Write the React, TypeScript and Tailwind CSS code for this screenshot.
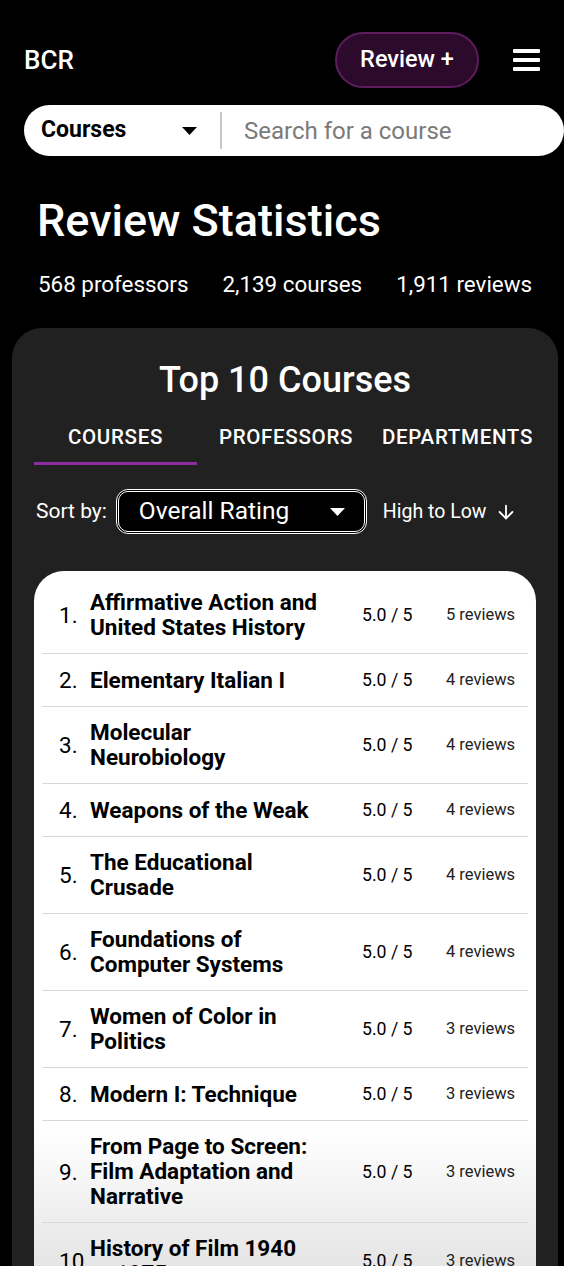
import { ArrowDown } from "lucide-react";

const courses = [
  { title: "Affirmative Action and United States History", rating: "5.0 / 5", reviews: "5 reviews" },
  { title: "Elementary Italian I", rating: "5.0 / 5", reviews: "4 reviews" },
  { title: "Molecular Neurobiology", rating: "5.0 / 5", reviews: "4 reviews" },
  { title: "Weapons of the Weak", rating: "5.0 / 5", reviews: "4 reviews" },
  { title: "The Educational Crusade", rating: "5.0 / 5", reviews: "4 reviews" },
  { title: "Foundations of Computer Systems", rating: "5.0 / 5", reviews: "4 reviews" },
  { title: "Women of Color in Politics", rating: "5.0 / 5", reviews: "3 reviews" },
  { title: "Modern I: Technique", rating: "5.0 / 5", reviews: "3 reviews" },
  { title: "From Page to Screen: Film Adaptation and Narrative", rating: "5.0 / 5", reviews: "3 reviews" },
  { title: "History of Film 1940 to 1975", rating: "5.0 / 5", reviews: "3 reviews" },
];

const Caret = () => (
  <svg width="15" height="8" viewBox="0 0 15 8" className="shrink-0">
    <path d="M0 0 L15 0 L7.5 8 Z" fill="currentColor" />
  </svg>
);

export default function App() {
  return (
    <div className="h-[1266px] bg-black text-white font-['Roboto',sans-serif] overflow-hidden">
      {/* Header */}
      <div className="flex items-center justify-between pl-6 pr-6 pt-8 h-[88px]">
        <span className="text-[26px] font-medium">BCR</span>
        <div className="flex items-center gap-[34px]">
          <button className="w-[144px] h-[56px] rounded-full bg-[#2c0a2c] border-2 border-[#5e1c5e] text-[23.5px] font-medium">
            Review +
          </button>
          <div className="flex flex-col gap-[5px] w-[27px]">
            <span className="h-[4px] bg-white rounded-[1px]" />
            <span className="h-[4px] bg-white rounded-[1px]" />
            <span className="h-[4px] bg-white rounded-[1px]" />
          </div>
        </div>
      </div>

      {/* Search */}
      <div className="ml-6 mt-[17px] w-[540px] h-[51px] bg-white rounded-full flex items-center text-black">
        <div className="flex items-center w-[196px] pl-[17px] pr-[23px] justify-between">
          <span className="text-[23px] font-bold">Courses</span>
          <Caret />
        </div>
        <div className="w-[2px] h-[37px] bg-[#c8c8c8]" />
        <span className="ml-[22px] text-[24px] text-[#7a7a7a]">Search for a course</span>
      </div>

      {/* Stats */}
      <h1 className="ml-[37px] mt-[38px] text-[45px] font-medium leading-[54px]">Review Statistics</h1>
      <div className="ml-[38px] mt-[22px] flex gap-[34px] text-[22.4px] leading-[28px]">
        <span>568 professors</span>
        <span>2,139 courses</span>
        <span>1,911 reviews</span>
      </div>

      {/* Card */}
      <div className="ml-3 mr-[6px] mt-[30px] bg-[#212121] rounded-[30px] pt-[29px] pb-10">
        <h2 className="text-center text-[36px] font-medium leading-[46px]">Top 10 Courses</h2>

        <div className="mt-[17px] ml-[22px] flex text-[20.5px] font-medium tracking-[0.7px] uppercase">
          <div className="w-[163px] flex flex-col items-center">
            <span className="h-[34px] leading-[34px]">Courses</span>
            <span className="mt-[8px] h-[3px] w-full bg-[#8e2ca0]" />
          </div>
          <div className="w-[178px] text-center h-[34px] leading-[34px]">Professors</div>
          <div className="w-[165px] text-center h-[34px] leading-[34px] whitespace-nowrap">Departments</div>
        </div>

        <div className="mt-[24px] ml-6 flex items-center">
          <span className="text-[21px] mr-[9px]">Sort by:</span>
          <div className="w-[251px] h-[45px] bg-black border-[3px] border-double border-white rounded-[12px] flex items-center justify-between pl-[20px] pr-[19px]">
            <span className="text-[24.5px]">Overall Rating</span>
            <Caret />
          </div>
          <span className="ml-4 text-[19.5px]">High to Low</span>
          <ArrowDown size={22} strokeWidth={2} className="ml-[9px]" />
        </div>

        {/* List */}
        <div className="mt-[37px] mx-[22px] rounded-[30px] px-2 pt-[6px] text-black bg-[linear-gradient(to_bottom,#ffffff_560px,#e0e0e0_720px)]">
          {courses.map((c, i) => (
            <div key={i} className="flex items-center px-[17px] py-[13px] border-b border-[#d9d9d9]">
              <span className="w-[31px] shrink-0 text-[22.5px] leading-[26px] whitespace-nowrap">{i + 1}.</span>
              <div className="w-[272px] shrink-0">
                <div className="max-w-[229px] text-[22.5px] font-bold leading-[25px]">{c.title}</div>
              </div>
              <span className="w-[84px] shrink-0 text-[17.7px] leading-[26px] whitespace-nowrap">{c.rating}</span>
              <span className="text-[16.5px] leading-[26px] text-[#222] whitespace-nowrap">{c.reviews}</span>
            </div>
          ))}
        </div>
      </div>
    </div>
  );
}
